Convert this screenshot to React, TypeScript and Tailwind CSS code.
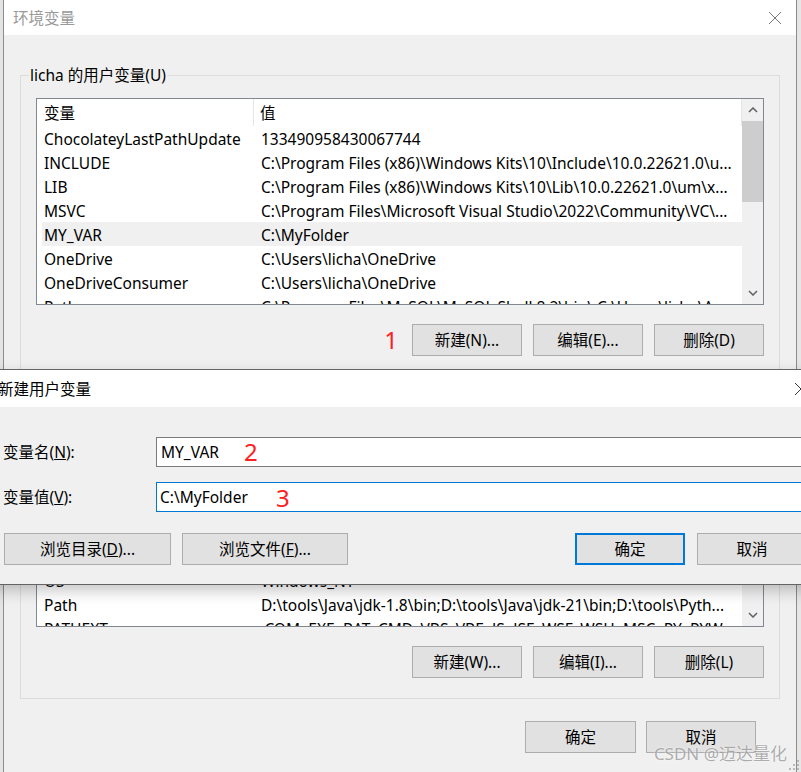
import React from 'react';

type Row = { name: string; value: string; selected?: boolean };

const userVars: Row[] = [
  { name: 'ChocolateyLastPathUpdate', value: '133490958430067744' },
  { name: 'INCLUDE', value: 'C:\\Program Files (x86)\\Windows Kits\\10\\Include\\10.0.22621.0\\u...' },
  { name: 'LIB', value: 'C:\\Program Files (x86)\\Windows Kits\\10\\Lib\\10.0.22621.0\\um\\x...' },
  { name: 'MSVC', value: 'C:\\Program Files\\Microsoft Visual Studio\\2022\\Community\\VC\\...' },
  { name: 'MY_VAR', value: 'C:\\MyFolder', selected: true },
  { name: 'OneDrive', value: 'C:\\Users\\licha\\OneDrive' },
  { name: 'OneDriveConsumer', value: 'C:\\Users\\licha\\OneDrive' },
  { name: 'Path', value: 'C:\\Program Files\\MySQL\\MySQL Shell 8.2\\bin\\;C:\\Users\\licha\\A...' },
];

const systemVars: Row[] = [
  { name: 'ComSpec', value: 'C:\\WINDOWS\\system32\\cmd.exe' },
  { name: 'DriverData', value: 'C:\\Windows\\System32\\Drivers\\DriverData' },
  { name: 'JAVA_HOME', value: 'D:\\tools\\Java\\jdk-21' },
  { name: 'MAVEN_HOME', value: 'D:\\tools\\apache-maven-3.9.6' },
  { name: 'NUMBER_OF_PROCESSORS', value: '16' },
  { name: 'OS', value: 'Windows_NT' },
  { name: 'Path', value: 'D:\\tools\\Java\\jdk-1.8\\bin;D:\\tools\\Java\\jdk-21\\bin;D:\\tools\\Pyth...' },
  { name: 'PATHEXT', value: '.COM;.EXE;.BAT;.CMD;.VBS;.VBE;.JS;.JSE;.WSF;.WSH;.MSC;.PY;.PYW' },
];

function Chevron({ up }: { up?: boolean }) {
  return (
    <svg width="10" height="6" viewBox="0 0 10 6">
      <polyline
        points={up ? '1,5 5,1 9,5' : '1,1 5,5 9,1'}
        fill="none"
        stroke="#606060"
        strokeWidth="1.5"
      />
    </svg>
  );
}

function CloseIcon({ color }: { color: string }) {
  return (
    <svg width="14" height="14" viewBox="0 0 14 14">
      <path d="M1 1 L13 13 M13 1 L1 13" stroke={color} strokeWidth="1" />
    </svg>
  );
}

function VarList({ rows, thumbH }: { rows: Row[]; thumbH: number }) {
  return (
    <div className="h-[207px] border border-[#828790] bg-white flex">
      <div className="flex-1 flex flex-col overflow-hidden">
        {/* Header */}
        <div className="h-[27px] shrink-0 flex">
          <div className="w-[217px] pl-[7px] flex items-center border-r border-[#e5e5e5]">变量</div>
          <div className="flex-1 pl-[6px] flex items-center border-r border-[#e5e5e5]">值</div>
        </div>
        {/* Rows */}
        {rows.map((r) => (
          <div
            key={r.name}
            className={`h-[24px] shrink-0 ml-[5px] pt-[2px] flex items-center whitespace-nowrap ${r.selected ? 'bg-[#f0f0f0]' : ''}`}
          >
            <div className="w-[219px] shrink-0 pl-[2px] overflow-hidden">{r.name}</div>
            <div className="flex-1 overflow-hidden">{r.value}</div>
          </div>
        ))}
      </div>
      {/* Scrollbar */}
      <div className="w-[21px] shrink-0 bg-[#f0f0f0] flex flex-col">
        <div className="h-[22px] flex items-center justify-center">
          <Chevron up />
        </div>
        <div className="bg-[#cdcdcd]" style={{ height: thumbH }} />
        <div className="flex-1" />
        <div className="h-[22px] flex items-center justify-center">
          <Chevron />
        </div>
      </div>
    </div>
  );
}

function Btn({
  children,
  className = '',
  primary,
}: {
  children: React.ReactNode;
  className?: string;
  primary?: boolean;
}) {
  return (
    <div
      className={`h-[32px] flex items-center justify-center bg-[#e1e1e1] ${
        primary ? 'border-2 border-[#0078d7]' : 'border border-[#adadad]'
      } ${className}`}
    >
      {children}
    </div>
  );
}

function Group({ title, children }: { title: string; children: React.ReactNode }) {
  return (
    <fieldset className="border border-[#dcdcdc] m-0 p-0">
      <legend className="ml-[8px] px-[1px] leading-[20px]">{title}</legend>
      <div className="px-[15px] pt-[13px] pb-[20px]">{children}</div>
    </fieldset>
  );
}

export default function App() {
  return (
    <div className="relative w-[801px] h-[772px] overflow-hidden bg-[#f0f0f0] text-[15.5px] leading-[22px] text-black font-['Noto_Sans','Noto_Sans_CJK_SC',sans-serif]">
      <div className="flex h-full">
        {/* Window behind, left */}
        <div className="w-[3px] shrink-0 bg-[#e4e4e4]" />

        {/* Environment variables window */}
        <div className="w-[794px] shrink-0 flex flex-col border-x border-[#8c8c8c]">
          <div className="h-[35px] shrink-0 bg-white flex items-center justify-between pl-[9px] pr-[14px]">
            <span className="text-[#999999]">环境变量</span>
            <CloseIcon color="#777777" />
          </div>

          <div className="flex-1 px-[16px] pt-[30px]">
            <Group title="licha 的用户变量(U)">
              <VarList rows={userVars} thumbH={81} />
              <div className="mt-[19px] flex items-center justify-end gap-[11px]">
                <span className="mr-[3px] text-[24px] leading-none text-[#ff2020]">1</span>
                <Btn className="w-[110px]">新建(N)...</Btn>
                <Btn className="w-[110px]">编辑(E)...</Btn>
                <Btn className="w-[110px]">删除(D)</Btn>
              </div>
            </Group>

            <div className="mt-[10px]">
              <Group title="系统变量(S)">
                <VarList rows={systemVars} thumbH={40} />
                <div className="mt-[19px] flex items-center justify-end gap-[11px]">
                  <Btn className="w-[110px]">新建(W)...</Btn>
                  <Btn className="w-[110px]">编辑(I)...</Btn>
                  <Btn className="w-[110px]">删除(L)</Btn>
                </div>
              </Group>
            </div>

            <div className="mt-[22px] pr-[24px] flex justify-end gap-[10px]">
              <Btn className="w-[111px]">确定</Btn>
              <Btn className="w-[110px]">取消</Btn>
            </div>
          </div>
        </div>

        {/* Window behind, right */}
        <div className="flex-1 bg-[#e6e6e6]" />
      </div>

      {/* New user variable dialog */}
      <div className="absolute left-[-8px] top-[369px] w-[830px] h-[216px] border border-[#646464] bg-[#f0f0f0] flex flex-col shadow-[0_6px_14px_rgba(0,0,0,0.22)]">
        <div className="h-[37px] shrink-0 bg-white flex items-center justify-between pl-[5px] pr-[13px]">
          <span>新建用户变量</span>
          <CloseIcon color="#333333" />
        </div>
        <div className="flex-1 pl-[10px] pt-[30px] flex flex-col">
          <div className="h-[30px] flex items-center">
            <div className="w-[153px] shrink-0">
              变量名(<span className="underline">N</span>):
            </div>
            <div className="relative flex-1 h-full bg-white border border-[#7a7a7a] pl-[4px] flex items-center">
              MY_VAR
              <span className="absolute left-[87px] top-[1px] text-[24px] leading-[26px] text-[#ff2020]">2</span>
            </div>
          </div>
          <div className="mt-[15px] h-[30px] flex items-center">
            <div className="w-[153px] shrink-0">
              变量值(<span className="underline">V</span>):
            </div>
            <div className="relative flex-1 h-full bg-white border border-[#0078d7] pl-[3px] flex items-center">
              C:\MyFolder
              <span className="absolute left-[119px] top-[2px] text-[24px] leading-[26px] text-[#ff2020]">3</span>
            </div>
          </div>
          <div className="mt-[21px] flex">
            <Btn className="ml-[1px] w-[167px]">
              浏览目录(<span className="underline">D</span>)...
            </Btn>
            <Btn className="ml-[11px] w-[166px]">
              浏览文件(<span className="underline">F</span>)...
            </Btn>
            <Btn primary className="ml-[227px] w-[110px]">
              确定
            </Btn>
            <Btn className="ml-[12px] w-[110px]">取消</Btn>
          </div>
        </div>
      </div>

      {/* Watermark */}
      <div className="absolute right-[14px] bottom-[7px] text-[17px] text-[rgba(120,120,120,0.6)] [text-shadow:0_0_2px_#ffffff]">
        CSDN @迈达量化
      </div>

      {/* Resize grip */}
      <svg className="absolute right-[1px] bottom-[1px]" width="14" height="14" viewBox="0 0 14 14">
        {[
          [11, 3], [7, 7], [11, 7], [3, 11], [7, 11], [11, 11],
        ].map(([x, y]) => (
          <rect key={`${x}-${y}`} x={x} y={y} width="2" height="2" fill="#b8b8b8" />
        ))}
      </svg>
    </div>
  );
}
